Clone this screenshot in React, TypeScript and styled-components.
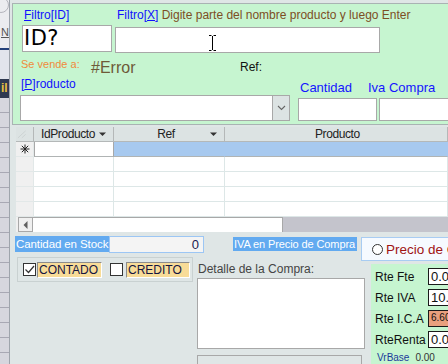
import styled, { createGlobalStyle } from 'styled-components';

const GlobalStyle = createGlobalStyle`
  html, body {
    margin: 0;
    padding: 0;
    background: #dfe6e6;
  }
  body {
    font-family: "Liberation Sans", Arial, sans-serif;
  }
`;

const Screen = styled.div`
  width: 448px;
  height: 364px;
  overflow: hidden;
  display: flex;
  background: #dfe6e6;
  font-family: "Liberation Sans", Arial, sans-serif;
`;

/* ventana de atras (borde izquierdo) */
const BackWindow = styled.div`
  width: 9px;
  flex: none;
  border-right: 1px solid #9ea4ac;
  display: flex;
  flex-direction: column;
  overflow: hidden;
  background: #d8d8e0;
`;

const BackTop = styled.div`
  height: 48px;
  flex: none;
  background: #ececf0;
  display: flex;
  flex-direction: column;
`;

const BackCircle = styled.div`
  width: 14px;
  height: 14px;
  margin: -3px 0 0 -7px;
  border: 1px solid #b4b4bc;
  border-radius: 50%;
`;

const BackLetter = styled.div`
  margin: 13px 0 0 1px;
  font-size: 11px;
  line-height: 12px;
  color: #555;
  text-decoration: underline;
`;

const BackNavyLine = styled.div`
  height: 2px;
  flex: none;
  background: #24407a;
`;

const BackBand = styled.div`
  height: 29px;
  flex: none;
  background: #e2e4ec;
`;

const BackDark = styled.div`
  height: 19px;
  flex: none;
  background: #2e3850;
  color: #e8c040;
  font-size: 12px;
  font-weight: bold;
  line-height: 19px;
  padding-left: 1px;
`;

const BackRest = styled.div`
  flex: 1;
  background: repeating-linear-gradient(
    to bottom,
    #d6d6de 0px,
    #d6d6de 14px,
    #a8a8b4 14px,
    #a8a8b4 15px
  );
`;

const Form = styled.div`
  flex: 1;
  min-width: 0;
  display: flex;
  flex-direction: column;
  overflow: hidden;

  & > * {
    flex-shrink: 0;
  }
`;

/* encabezado verde */
const GreenPanel = styled.div`
  margin: 3px 0 0 2px;
  height: 122px;
  box-sizing: border-box;
  background: #c6f5d0;
  border: 1px solid #a9b3b3;
  border-right: none;
  display: flex;
  flex-direction: column;
`;

const TopRow = styled.div`
  display: flex;
  align-items: flex-start;
  padding-left: 9px;
`;

const FieldGroup = styled.div<{ $ml?: number }>`
  display: flex;
  flex-direction: column;
  margin-left: ${(p) => p.$ml ?? 0}px;
`;

const FilterLabel = styled.div<{ $mb: number }>`
  margin: 3px 0 ${(p) => p.$mb}px 2px;
  height: 16px;
  line-height: 16px;
  font-size: 12px;
  color: #1010ff;
  white-space: nowrap;
`;

const Key = styled.span`
  text-decoration: underline;
`;

const Hint = styled.span`
  color: #7d4e24;
`;

const TextBox = styled.div<{ $w: number; $h: number }>`
  position: relative;
  width: ${(p) => p.$w}px;
  height: ${(p) => p.$h}px;
  box-sizing: border-box;
  background: #ffffff;
  border: 1px solid #a8a8a8;
  flex: none;
`;

const IdText = styled.div`
  font-family: "DejaVu Sans", Verdana, sans-serif;
  font-size: 21px;
  line-height: 25px;
  padding-left: 1px;
  color: #000;
  letter-spacing: 0.5px;
`;

const Cursor = styled.svg`
  position: absolute;
  left: 92px;
  top: 7px;
`;

const OrangeTail = styled.div`
  margin: 29px 0 0 57px;
  font-size: 13px;
  line-height: 16px;
  color: #f4a25a;
  white-space: nowrap;
`;

const MiddleRow = styled.div`
  display: flex;
  align-items: flex-start;
  margin-top: 4px;
  height: 18px;
  padding-left: 8px;
`;

const SellLabel = styled.div`
  width: 70px;
  font-size: 11px;
  line-height: 14px;
  color: #f08a3c;
  white-space: nowrap;
`;

const ErrorText = styled.div`
  width: 149px;
  margin-top: 2px;
  font-size: 16px;
  line-height: 18px;
  color: #6e5a38;
`;

const RefLabel = styled.div`
  margin-top: 3px;
  font-size: 12px;
  line-height: 14px;
  color: #111;
`;

const BottomRow = styled.div`
  margin-top: auto;
  display: flex;
  align-items: flex-end;
  padding: 0 0 3px 7px;
`;

const SmallBlueLabel = styled.div`
  margin: 0 0 4px 1px;
  font-size: 12px;
  line-height: 14px;
  color: #1010ff;
`;

const BigBlueLabel = styled.div<{ $ml: number }>`
  margin: 0 0 2px ${(p) => p.$ml}px;
  font-size: 13px;
  line-height: 16px;
  color: #1414ff;
  white-space: nowrap;
`;

const Combo = styled.div`
  width: 270px;
  height: 26px;
  box-sizing: border-box;
  background: #fff;
  border: 1px solid #a8a8a8;
  display: flex;
  justify-content: flex-end;
`;

const ComboButton = styled.div`
  width: 16px;
  background: #dce3e3;
  border-left: 1px solid #a8a8a8;
  display: flex;
  align-items: center;
  justify-content: center;
`;

/* hoja de datos */
const Sheet = styled.div`
  margin: 2px 0 0 6px;
  display: grid;
  grid-template-columns: 18px 80px 111px 1fr;
  grid-auto-rows: 15px;
  background: #fff;
`;

const HeadCell = styled.div<{ $center?: boolean; $pl?: number }>`
  box-sizing: border-box;
  background: #dce3e3;
  border-right: 1px solid #b4b8b8;
  border-bottom: 1px solid #b4b8b8;
  display: flex;
  align-items: center;
  justify-content: ${(p) => (p.$center ? 'center' : 'flex-start')};
  padding: 0 6px 0 ${(p) => p.$pl ?? 0}px;
  font-size: 12px;
  letter-spacing: -0.4px;
  color: #222;
`;

const HeadText = styled.span<{ $align?: string }>`
  flex: 1;
  text-align: ${(p) => p.$align ?? 'left'};
`;

const SelectorCell = styled.div`
  box-sizing: border-box;
  background: #f0f0f0;
  border-bottom: 1px solid #e2e8e8;
  border-right: 1px solid #e2e8e8;
  display: flex;
  align-items: center;
  justify-content: center;
`;

const DataCell = styled.div<{ $kind?: 'active' | 'selected' }>`
  box-sizing: border-box;
  background: ${(p) => (p.$kind === 'selected' ? '#a7c9ef' : '#ffffff')};
  border-right: 1px solid
    ${(p) => (p.$kind === 'active' ? '#a8a8a8' : p.$kind === 'selected' ? '#a7c9ef' : '#dde7e7')};
  border-bottom: 1px solid ${(p) => (p.$kind ? '#b0b4b4' : '#dde7e7')};
  border-left: ${(p) => (p.$kind === 'active' ? '1px solid #a8a8a8' : 'none')};
`;

const ScrollBar = styled.div`
  margin-left: 6px;
  height: 15px;
  display: flex;
  background: #c4c4cc;
`;

const ScrollGap = styled.div`
  width: 2px;
  background: #f0f0f0;
`;

const ScrollArrow = styled.div`
  width: 15px;
  box-sizing: border-box;
  background: #f0f0f0;
  border: 1px solid #a8a8a8;
  display: flex;
  align-items: center;
  justify-content: center;
`;

const ScrollTrack = styled.div`
  width: 250px;
  box-sizing: border-box;
  background: #fff;
  border-top: 1px solid #a8a8a8;
  border-right: 1px solid #a8a8a8;
`;

/* parte inferior */
const StockRow = styled.div`
  margin: 4px 0 0 5px;
  height: 16px;
  display: flex;
  align-items: flex-start;
`;

const BlueTag = styled.div<{ $w: number; $h: number; $mt?: number; $ml?: number; $fs?: number }>`
  width: ${(p) => p.$w}px;
  height: ${(p) => p.$h}px;
  margin: ${(p) => p.$mt ?? 0}px 0 0 ${(p) => p.$ml ?? 0}px;
  background: #62aaf0;
  color: #fff;
  font-size: ${(p) => p.$fs ?? 11.5}px;
  letter-spacing: -0.1px;
  line-height: ${(p) => p.$h}px;
  padding-left: 1px;
  white-space: nowrap;
  box-sizing: border-box;
  overflow: hidden;
  flex: none;
`;

const StockValue = styled.div`
  width: 95px;
  height: 17px;
  box-sizing: border-box;
  background: #f4f4f4;
  border: 1px solid #9cc6f4;
  text-align: right;
  padding-right: 4px;
  font-size: 13px;
  line-height: 15px;
  color: #1a1a50;
  flex: none;
`;

const RadioFrame = styled.div`
  margin: 1px 0 0 4px;
  height: 24px;
  width: 120px;
  box-sizing: border-box;
  flex: none;
  background: #f6faff;
  border: 1px solid #a8ccf2;
  display: flex;
  align-items: center;
  padding-left: 10px;
  gap: 3px;
  font-size: 13.5px;
  color: #a01414;
  white-space: nowrap;
`;

const RadioDot = styled.div`
  width: 11px;
  height: 11px;
  box-sizing: border-box;
  border: 1px solid #333;
  border-radius: 50%;
  background: #fff;
  flex: none;
`;

const LowerRow = styled.div`
  margin: 5px 0 0 7px;
  display: flex;
  align-items: flex-start;
`;

const CheckGroup = styled.div`
  width: 176px;
  height: 25px;
  box-sizing: border-box;
  border: 1px solid #c9d1d1;
  display: flex;
  align-items: center;
  padding-left: 5px;
  flex: none;
`;

const CheckBox = styled.div<{ $ml?: number }>`
  width: 13px;
  height: 13px;
  box-sizing: border-box;
  margin-left: ${(p) => p.$ml ?? 0}px;
  border: 1px solid #333;
  background: #fff;
  display: flex;
  align-items: center;
  justify-content: center;
  flex: none;
`;

const TanLabel = styled.div<{ $w: number; $ml: number }>`
  width: ${(p) => p.$w}px;
  height: 16px;
  margin-left: ${(p) => p.$ml}px;
  box-sizing: border-box;
  background: #f8dc98;
  border-top: 1px solid #8c8c8c;
  border-left: 1px solid #8c8c8c;
  border-bottom: 1px solid #fff;
  border-right: 1px solid #fff;
  font-size: 12px;
  line-height: 14px;
  padding-left: 1px;
  color: #141440;
  flex: none;
`;

const DetailColumn = styled.div`
  margin: 5px 0 0 4px;
  display: flex;
  flex-direction: column;
  flex: none;
`;

const DetailLabel = styled.div`
  font-size: 12px;
  line-height: 14px;
  color: #444;
  margin-bottom: 2px;
  padding-left: 1px;
`;

const DetailBox = styled.div`
  width: 168px;
  height: 71px;
  box-sizing: border-box;
  background: #fff;
  border: 1px solid #a8a8a8;
`;

const LowerBox = styled.div`
  width: 165px;
  height: 20px;
  margin-top: 6px;
  box-sizing: border-box;
  border: 1px solid #a8a8a8;
`;

const RtePanel = styled.div`
  margin: 7px 0 0 6px;
  flex: 1;
  height: 110px;
  background: #c6f5d0;
  padding: 4px 0 0 4px;
  box-sizing: border-box;
  display: grid;
  grid-template-columns: 53px 40px;
  grid-auto-rows: 17px;
  row-gap: 4px;
  align-items: center;
`;

const RteLabel = styled.div`
  font-size: 12px;
  color: #111;
  white-space: nowrap;
`;

const RteInput = styled.div<{ $salmon?: boolean }>`
  height: 17px;
  box-sizing: border-box;
  border: 1px solid #1a1a1a;
  background: ${(p) => (p.$salmon ? '#e9a07e' : '#fff')};
  font-size: ${(p) => (p.$salmon ? 10 : 13)}px;
  line-height: ${(p) => (p.$salmon ? 13 : 15)}px;
  padding-left: 2px;
  color: #111;
  white-space: nowrap;
`;

const BaseRow = styled.div`
  grid-column: 1 / 3;
  display: flex;
  gap: 6px;
  padding-left: 2px;
  margin-top: -7px;
  font-size: 10px;
`;

const BaseLabel = styled.span`
  color: #1a3a9a;
`;

const BaseValue = styled.span`
  color: #333;
`;

const DropArrow = () => (
  <svg width="8" height="5" viewBox="0 0 8 5">
    <path d="M0 0.5h7L3.5 4z" fill="#333" />
  </svg>
);

const rows = [0, 1, 2, 3];

export default function App() {
  return (
    <Screen>
      <GlobalStyle />
      <BackWindow>
        <BackTop>
          <BackCircle />
          <BackLetter>N</BackLetter>
        </BackTop>
        <BackNavyLine />
        <BackBand />
        <BackDark>il</BackDark>
        <BackRest />
      </BackWindow>

      <Form>
        <GreenPanel>
          <TopRow>
            <FieldGroup>
              <FilterLabel $mb={2}>
                <Key>F</Key>iltro[ID]
              </FilterLabel>
              <TextBox $w={90} $h={27}>
                <IdText>ID?</IdText>
              </TextBox>
            </FieldGroup>
            <FieldGroup $ml={3}>
              <FilterLabel $mb={4}>
                Filtro[<Key>X</Key>] <Hint>Digite parte del nombre producto y luego Enter</Hint>
              </FilterLabel>
              <TextBox $w={265} $h={26}>
                <Cursor width="9" height="16" viewBox="0 0 9 16">
                  <path d="M1 0.5h2.5M5.5 0.5H8M4.5 1v14M1 15.5h2.5M5.5 15.5H8" stroke="#000" strokeWidth="1" fill="none" />
                </Cursor>
              </TextBox>
            </FieldGroup>
            <OrangeTail>Valor</OrangeTail>
          </TopRow>

          <MiddleRow>
            <SellLabel>Se vende a:</SellLabel>
            <ErrorText>#Error</ErrorText>
            <RefLabel>Ref:</RefLabel>
          </MiddleRow>

          <BottomRow>
            <FieldGroup>
              <SmallBlueLabel>
                [<Key>P</Key>]roducto
              </SmallBlueLabel>
              <Combo>
                <ComboButton>
                  <svg width="9" height="6" viewBox="0 0 9 6">
                    <path d="M1 1l3.5 3.5L8 1" stroke="#666" strokeWidth="1.1" fill="none" />
                  </svg>
                </ComboButton>
              </Combo>
            </FieldGroup>
            <FieldGroup $ml={8}>
              <BigBlueLabel $ml={2}>Cantidad</BigBlueLabel>
              <TextBox $w={79} $h={23} />
            </FieldGroup>
            <FieldGroup $ml={2}>
              <BigBlueLabel $ml={-11}>Iva Compra</BigBlueLabel>
              <TextBox $w={80} $h={23} />
            </FieldGroup>
          </BottomRow>
        </GreenPanel>

        <Sheet>
          <HeadCell>
            <svg width="17" height="14" viewBox="0 0 17 14">
              <path d="M3 13L15 2M9 13L15 7.5" stroke="#c4caca" strokeWidth="1" />
            </svg>
          </HeadCell>
          <HeadCell $pl={7}>
            <HeadText>IdProducto</HeadText>
            <DropArrow />
          </HeadCell>
          <HeadCell $center $pl={8}>
            <HeadText $align="center">Ref</HeadText>
            <DropArrow />
          </HeadCell>
          <HeadCell $center $pl={90}>
            <HeadText>Producto</HeadText>
          </HeadCell>

          <SelectorCell>
            <svg width="10" height="10" viewBox="0 0 10 10">
              <path d="M5 0.5v9M0.5 5h9M1.8 1.8l6.4 6.4M8.2 1.8l-6.4 6.4" stroke="#222" strokeWidth="1" />
            </svg>
          </SelectorCell>
          <DataCell $kind="active" />
          <DataCell $kind="selected" />
          <DataCell $kind="selected" />

          {rows.map((r) => [
            <SelectorCell key={`s${r}`} />,
            <DataCell key={`a${r}`} />,
            <DataCell key={`b${r}`} />,
            <DataCell key={`c${r}`} />,
          ])}
        </Sheet>

        <ScrollBar>
          <ScrollGap />
          <ScrollArrow>
            <svg width="5" height="8" viewBox="0 0 5 8">
              <path d="M4.5 0L0.5 4l4 4z" fill="#606060" />
            </svg>
          </ScrollArrow>
          <ScrollTrack />
        </ScrollBar>

        <StockRow>
          <BlueTag $w={94} $h={16}>Cantidad en Stock</BlueTag>
          <StockValue>0</StockValue>
          <BlueTag $w={124} $h={14} $mt={1} $ml={29} $fs={11}>
            IVA en Precio de Compra
          </BlueTag>
          <RadioFrame>
            <RadioDot />
            Precio de Compra
          </RadioFrame>
        </StockRow>

        <LowerRow>
          <CheckGroup>
            <CheckBox>
              <svg width="11" height="11" viewBox="0 0 11 11">
                <path d="M1.5 5.5l3 3L10 2" stroke="#333" strokeWidth="1.2" fill="none" />
              </svg>
            </CheckBox>
            <TanLabel $w={65} $ml={1}>CONTADO</TanLabel>
            <CheckBox $ml={8} />
            <TanLabel $w={64} $ml={3}>CREDITO</TanLabel>
          </CheckGroup>

          <DetailColumn>
            <DetailLabel>Detalle de la Compra:</DetailLabel>
            <DetailBox />
            <LowerBox />
          </DetailColumn>

          <RtePanel>
            <RteLabel>Rte Fte</RteLabel>
            <RteInput>0.00</RteInput>
            <RteLabel>Rte IVA</RteLabel>
            <RteInput>10.00</RteInput>
            <RteLabel>Rte I.C.A</RteLabel>
            <RteInput $salmon>6.60%</RteInput>
            <RteLabel>RteRenta</RteLabel>
            <RteInput>0.00</RteInput>
            <BaseRow>
              <BaseLabel>VrBase</BaseLabel>
              <BaseValue>0.00</BaseValue>
            </BaseRow>
          </RtePanel>
        </LowerRow>
      </Form>
    </Screen>
  );
}
